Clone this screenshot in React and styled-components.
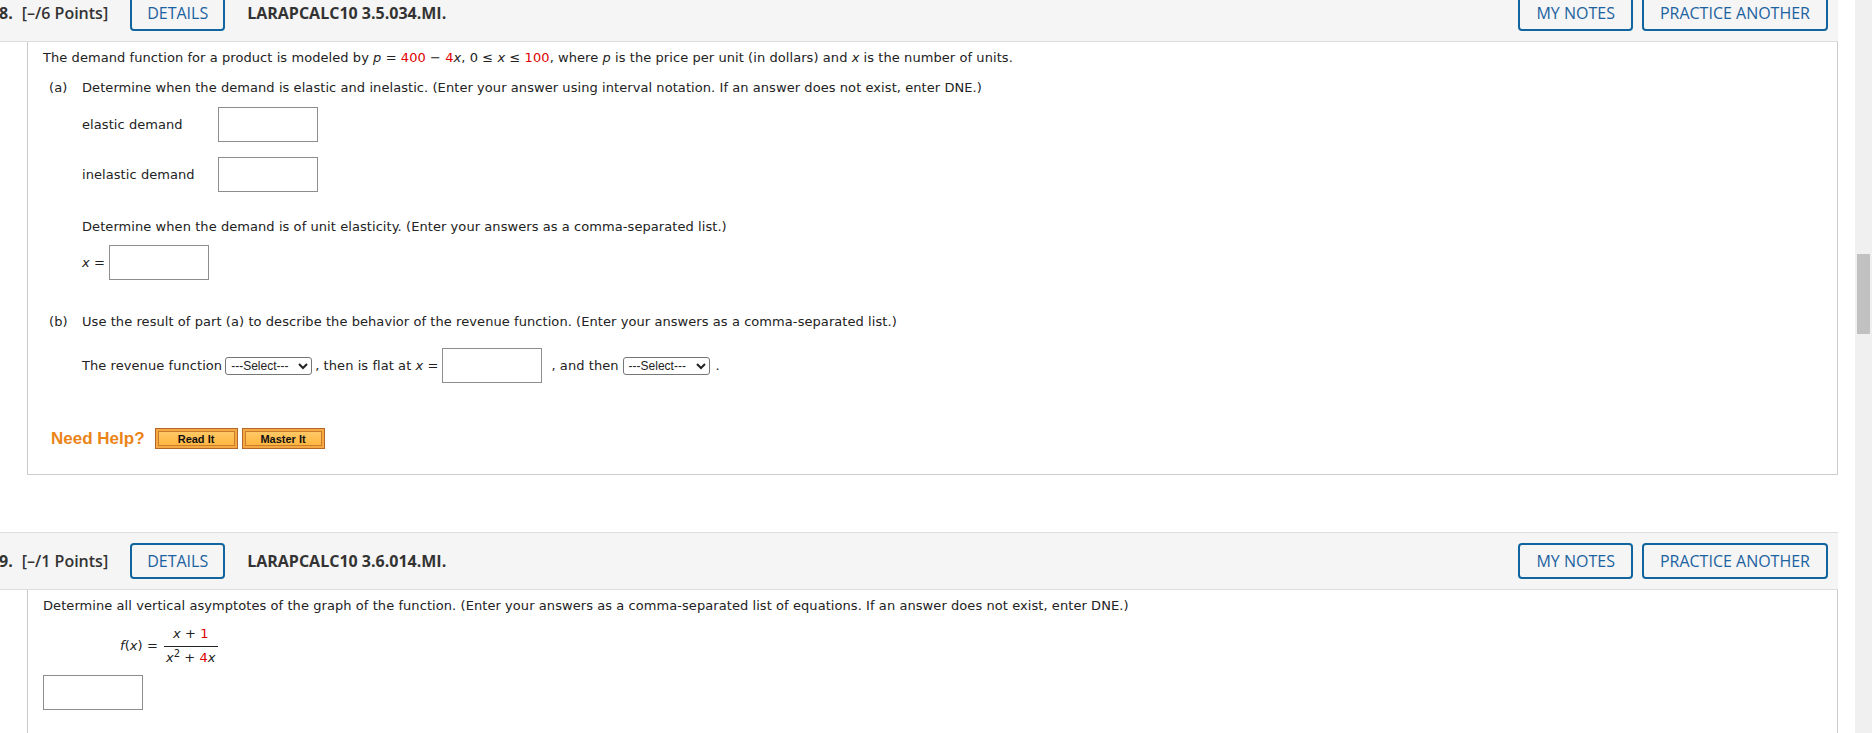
import React from 'react';
import styled, { createGlobalStyle } from 'styled-components';

const GlobalStyle = createGlobalStyle`
  html, body {
    margin: 0;
    padding: 0;
    background: #fff;
    overflow: hidden;
  }
  body {
    font-family: "DejaVu Sans", Verdana, sans-serif;
    color: #222;
  }
`;

const Page = styled.div`
  display: flex;
  width: 1872px;
  height: 733px;
  overflow: hidden;
`;

const Main = styled.div`
  flex: 1;
  min-width: 0;
  margin-left: -10px;
  margin-top: -16px;
  padding-right: 17px;
`;

const Scrollbar = styled.div`
  flex: none;
  width: 17px;
  box-sizing: border-box;
  padding: 254px 2px 0;
  background: #f0f0f0;
`;

const Thumb = styled.div`
  height: 80px;
  background: #c1c1c1;
`;

const Question = styled.section`
  margin-bottom: 57px;
`;

const Header = styled.div`
  display: flex;
  align-items: center;
  height: 58px;
  box-sizing: border-box;
  padding: 0 10px 0 9px;
  background: #f5f5f5;
  border-top: 1px solid #ddd;
  border-bottom: 1px solid #ddd;
  font-family: "Open Sans", sans-serif;
  font-size: 16px;
  color: #333;
`;

const Number = styled.span`
  font-weight: 700;
  margin-right: 9px;
`;

const Points = styled.span`
  font-weight: 600;
  margin-right: 22px;
`;

const Title = styled.span`
  font-weight: 700;
  margin-left: 22px;
`;

const HeaderActions = styled.div`
  display: flex;
  gap: 9px;
  margin-left: auto;
`;

const OutlineButton = styled.button`
  height: 36px;
  box-sizing: border-box;
  padding: 0 ${(p) => (p.$pad ? p.$pad : 15)}px;
  border: 2px solid #11659f;
  border-radius: 4px;
  background: transparent;
  color: #1b62a0;
  font-family: "Open Sans", sans-serif;
  font-size: 16px;
  font-weight: 500;
  text-transform: uppercase;
  cursor: pointer;
`;

const Body = styled.div`
  margin-left: 37px;
  border: 1px solid #ccc;
  border-top: none;
  padding: 8px 15px ${(p) => (p.$last ? 60 : 25)}px;
  font-size: 13px;
  line-height: 16px;
  letter-spacing: 0.07px;
`;

const Para = styled.div`
  margin-top: ${(p) => p.$mt || 0}px;
  padding-left: ${(p) => p.$indent || 0}px;
`;

const Part = styled.div`
  display: flex;
  margin-top: ${(p) => p.$mt || 0}px;
  padding-left: 6px;
`;

const PartLabel = styled.span`
  width: 33px;
  flex: none;
`;

const Row = styled.div`
  display: flex;
  align-items: center;
  margin-top: ${(p) => p.$mt || 0}px;
  padding-left: ${(p) => (p.$indent === undefined ? 39 : p.$indent)}px;
`;

const FieldLabel = styled.span`
  width: ${(p) => p.$w}px;
  flex: none;
`;

const Joiner = styled.span`
  padding-left: ${(p) => p.$pl || 0}px;
  padding-right: ${(p) => p.$pr || 0}px;
`;

const Red = styled.span`
  color: #e00000;
`;

const Var = styled.i`
  font-family: "DejaVu Sans", Verdana, sans-serif;
`;

const AnswerBox = styled.input`
  width: 100px;
  height: 35px;
  box-sizing: border-box;
  border: 1px solid #8d8d8d;
  margin: 0;
  padding: 0 4px;
  background: #fff;
`;

const Select = styled.select`
  height: 18px;
  width: ${(p) => p.$w}px;
  box-sizing: border-box;
  margin: 0 3px;
  padding: 0 1px;
  border: 1px solid #767676;
  border-radius: 3px;
  background: #fff;
  color: #222;
  font-family: "Liberation Sans", Arial, sans-serif;
  font-size: 12px;
  letter-spacing: 0;
`;

const HelpRow = styled.div`
  display: flex;
  align-items: center;
  margin-top: 45px;
  padding-left: 8px;
`;

const HelpText = styled.span`
  font-family: "Liberation Sans", Arial, sans-serif;
  font-weight: 700;
  font-size: 17px;
  letter-spacing: 0;
  color: #ea8417;
  margin-right: 10px;
`;

const HelpButton = styled.button`
  width: 83px;
  height: 21px;
  box-sizing: border-box;
  padding: 2px;
  margin-right: 4px;
  border: 1px solid #b0692a;
  background: #f6a841;
  cursor: pointer;
`;

const HelpInner = styled.span`
  display: flex;
  align-items: center;
  justify-content: center;
  height: 100%;
  box-sizing: border-box;
  border: 1px solid #c97d2f;
  background: linear-gradient(#ffc865, #ffb641);
  font-family: "Liberation Sans", Arial, sans-serif;
  font-weight: 700;
  font-size: 11px;
  color: #111;
`;

const Formula = styled.div`
  display: flex;
  align-items: center;
  margin-top: 13px;
  padding-left: 77px;
`;

const Fraction = styled.span`
  display: inline-flex;
  flex-direction: column;
  align-items: center;
  margin-left: 6px;
`;

const Numerator = styled.span`
  padding: 0 2px 5px;
  line-height: 14px;
`;

const Denominator = styled.span`
  padding: 4px 2px 0;
  line-height: 14px;
  border-top: 1px solid #222;
`;

const Sup = styled.sup`
  font-size: 10px;
  line-height: 0;
`;

const QuestionHeader = ({ number, points, code }) => (
  <Header>
    <Number>{number}.</Number>
    <Points>[–/{points} Points]</Points>
    <OutlineButton>Details</OutlineButton>
    <Title>{code}</Title>
    <HeaderActions>
      <OutlineButton $pad={16}>My Notes</OutlineButton>
      <OutlineButton $pad={16}>Practice Another</OutlineButton>
    </HeaderActions>
  </Header>
);

const SelectBox = () => (
  <Select $w={87} defaultValue="">
    <option value="">---Select---</option>
    <option value="inc">increases</option>
    <option value="dec">decreases</option>
  </Select>
);

const App = () => {
  return (
    <Page>
      <GlobalStyle />
      <Main>
        <Question>
          <QuestionHeader number={8} points={6} code="LARAPCALC10 3.5.034.MI." />
          <Body>
            <Para>
              The demand function for a product is modeled by <Var>p</Var> = <Red>400</Red> − <Red>4</Red>
              <Var>x</Var>, 0 ≤ <Var>x</Var> ≤ <Red>100</Red>, where <Var>p</Var> is the price per unit (in
              dollars) and <Var>x</Var> is the number of units.
            </Para>
            <Part $mt={14}>
              <PartLabel>(a)</PartLabel>
              <span>
                Determine when the demand is elastic and inelastic. (Enter your answer using interval notation. If
                an answer does not exist, enter DNE.)
              </span>
            </Part>
            <Row $mt={11}>
              <FieldLabel $w={136}>elastic demand</FieldLabel>
              <AnswerBox />
            </Row>
            <Row $mt={15}>
              <FieldLabel $w={136}>inelastic demand</FieldLabel>
              <AnswerBox />
            </Row>
            <Para $mt={27} $indent={39}>
              Determine when the demand is of unit elasticity. (Enter your answers as a comma-separated list.)
            </Para>
            <Row $mt={10}>
              <FieldLabel $w={27}>
                <Var>x</Var> =
              </FieldLabel>
              <AnswerBox />
            </Row>
            <Part $mt={34}>
              <PartLabel>(b)</PartLabel>
              <span>
                Use the result of part (a) to describe the behavior of the revenue function. (Enter your answers as
                a comma-separated list.)
              </span>
            </Part>
            <Row $mt={18}>
              <span>The revenue function</span>
              <SelectBox />
              <Joiner $pr={4}>
                , then is flat at <Var>x</Var> =
              </Joiner>
              <AnswerBox />
              <Joiner $pl={9} $pr={1}>
                , and then
              </Joiner>
              <SelectBox />
              <Joiner $pl={3}>.</Joiner>
            </Row>
            <HelpRow>
              <HelpText>Need Help?</HelpText>
              <HelpButton>
                <HelpInner>Read It</HelpInner>
              </HelpButton>
              <HelpButton>
                <HelpInner>Master It</HelpInner>
              </HelpButton>
            </HelpRow>
          </Body>
        </Question>
        <Question>
          <QuestionHeader number={9} points={1} code="LARAPCALC10 3.6.014.MI." />
          <Body $last>
            <Para>
              Determine all vertical asymptotes of the graph of the function. (Enter your answers as a
              comma-separated list of equations. If an answer does not exist, enter DNE.)
            </Para>
            <Formula>
              <span>
                <Var>f</Var>(<Var>x</Var>) =
              </span>
              <Fraction>
                <Numerator>
                  <Var>x</Var> + <Red>1</Red>
                </Numerator>
                <Denominator>
                  <Var>x</Var>
                  <Sup>2</Sup> + <Red>4</Red>
                  <Var>x</Var>
                </Denominator>
              </Fraction>
            </Formula>
            <Row $mt={10} $indent={0}>
              <AnswerBox />
            </Row>
          </Body>
        </Question>
      </Main>
      <Scrollbar>
        <Thumb />
      </Scrollbar>
    </Page>
  );
};

export default App;
